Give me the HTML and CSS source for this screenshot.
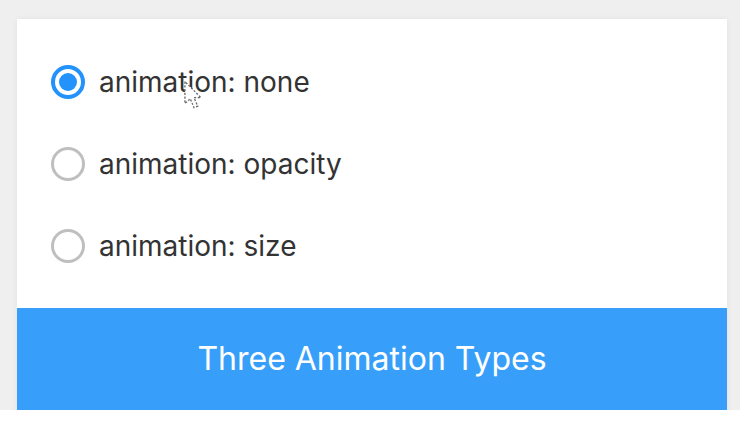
FILE: index.html
```html
<!DOCTYPE html>
<html>
<head>
<meta charset="utf-8">
<link rel="stylesheet" href="styles.css">
</head>
<body>
<div class="frame">
  <div class="card">
    <div class="options">
      <label class="option">
        <span class="radio checked"></span>
        <span class="label">animation: none</span>
      </label>
      <label class="option">
        <span class="radio"></span>
        <span class="label">animation: opacity</span>
      </label>
      <label class="option">
        <span class="radio"></span>
        <span class="label">animation: size</span>
      </label>
    </div>
    <div class="banner">Three Animation Types</div>
  </div>
</div>
<svg class="cursor" width="22" height="32" viewBox="0 0 20 30">
  <path d="M1.5 1.5 L1.5 22 L6.5 17.5 L10 26 L13.5 24.5 L10 16.5 L16.5 16.5 Z" fill="#fff" stroke="#666" stroke-width="1.2" stroke-dasharray="2 1.5"/>
</svg>
</body>
</html>
```

FILE: styles.css
```css
html, body {
  margin: 0;
  padding: 0;
  background: #ffffff;
}

body {
  width: 740px;
  height: 432px;
  position: relative;
  font-family: Inter, "Liberation Sans", sans-serif;
}

.frame {
  height: 410px;
  overflow: hidden;
  background: #efefef;
  padding: 19px 13px 0 17px;
  box-sizing: border-box;
}

.card {
  background: #ffffff;
  height: 400px;
  box-shadow: 0 0 6px rgba(0, 0, 0, 0.06);
  display: flex;
  flex-direction: column;
}

.options {
  display: flex;
  flex-direction: column;
  gap: 47px;
  padding: 45px 0 0 34px;
  height: 244px;
  box-sizing: border-box;
}

.option {
  display: flex;
  align-items: center;
  gap: 14px;
  height: 35px;
}

.radio {
  width: 34px;
  height: 34px;
  border-radius: 50%;
  border: 3px solid #bfbfbf;
  box-sizing: border-box;
  flex: none;
  position: relative;
}

.radio.checked {
  border: 4px solid #2392fb;
}

.radio.checked::after {
  content: "";
  position: absolute;
  left: 4px;
  top: 4px;
  width: 18px;
  height: 18px;
  border-radius: 50%;
  background: #2392fb;
}

.label {
  font-size: 28px;
  color: #333333;
  letter-spacing: 0;
}

.banner {
  margin-top: 45px;
  height: 102px;
  background: #379ffa;
  color: #ffffff;
  font-size: 32px;
  display: flex;
  align-items: center;
  justify-content: center;
  padding-bottom: 2px;
  box-sizing: border-box;
}

.cursor {
  position: absolute;
  left: 183px;
  top: 80px;
}
```
